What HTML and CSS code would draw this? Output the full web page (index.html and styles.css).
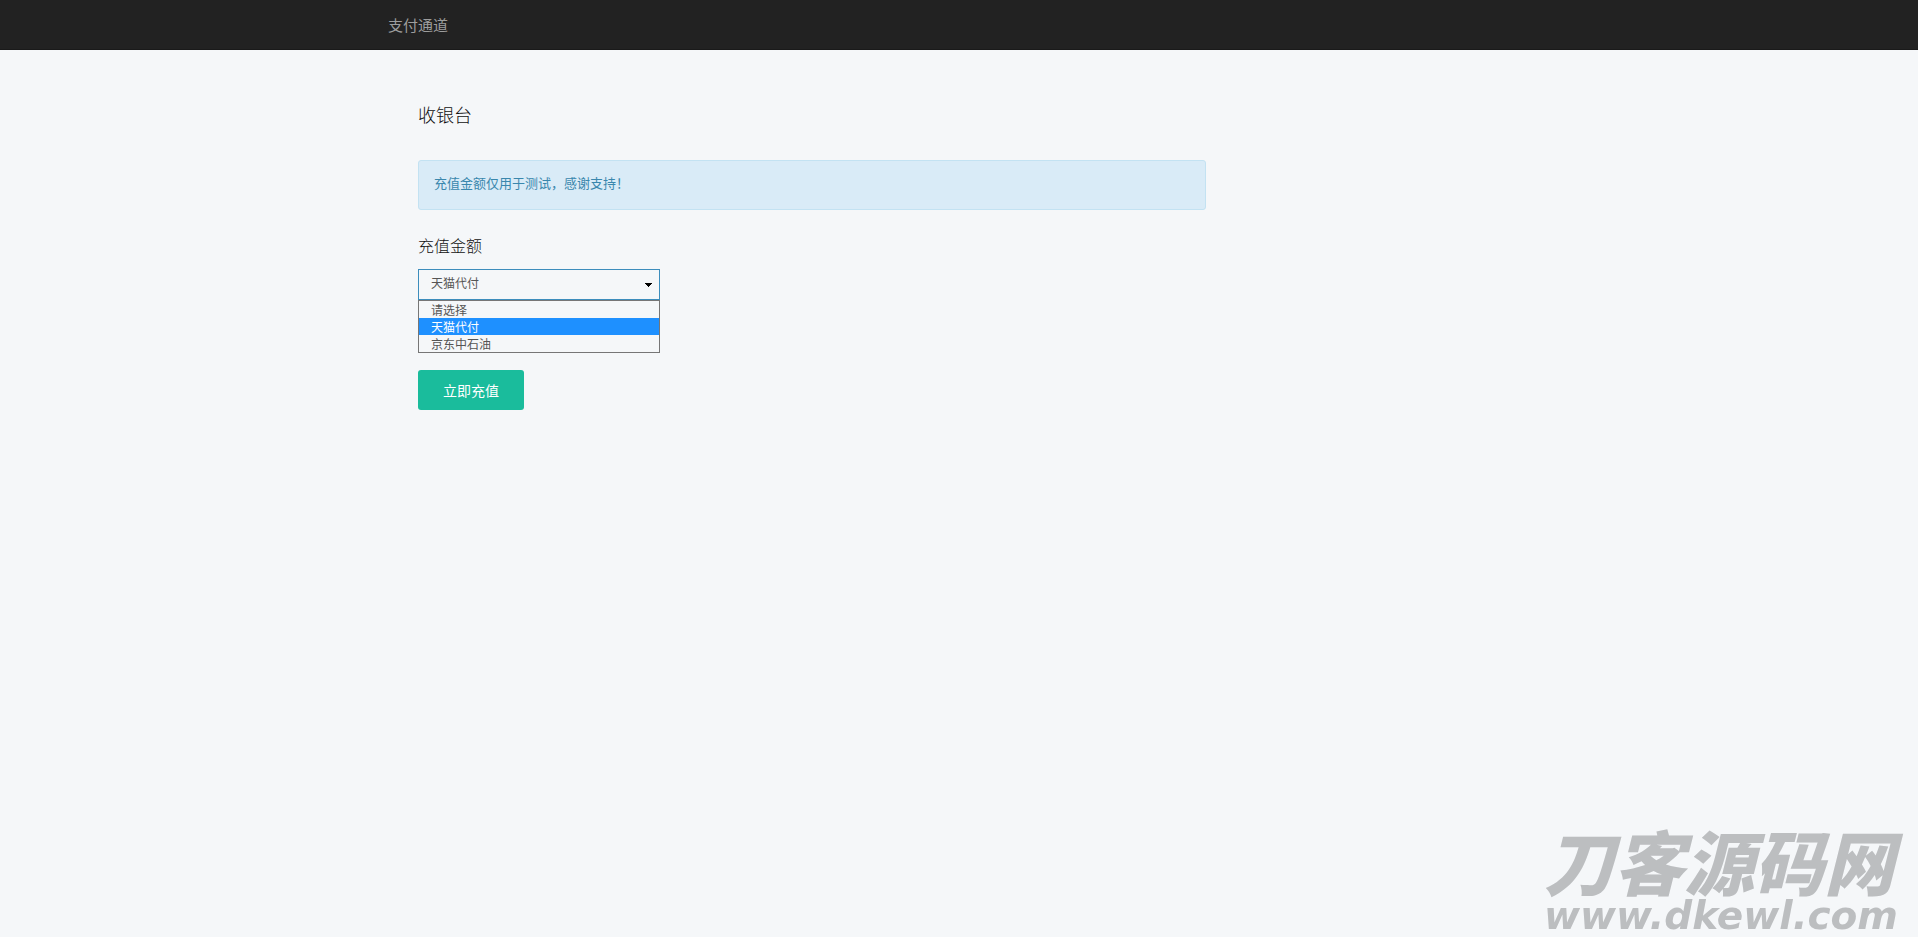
FILE: index.html
```html
<!DOCTYPE html>
<html lang="zh-CN">
<head>
  <meta charset="UTF-8">
  <meta name="viewport" content="width=device-width, initial-scale=1.0">
  <title>收银台</title>
  <link rel="stylesheet" href="styles.css">
</head>
<body>

  <nav class="navbar">
    <div class="container">
      <a class="navbar-link" href="#">支付通道</a>
    </div>
  </nav>

  <main class="container">
    <div class="content">
      <h1 class="page-title">收银台</h1>

      <div class="alert">充值金额仅用于测试，感谢支持！</div>

      <form class="pay-form">
        <label class="pay-label" for="channel">充值金额</label>
        <div class="select-box">
          <select class="form-control" id="channel" name="channel">
            <option>请选择</option>
            <option selected>天猫代付</option>
            <option>京东中石油</option>
          </select>
          <svg class="caret" viewBox="0 0 8 5" aria-hidden="true"><path d="M0 0h7v1H6v1H5v1H4v1H3V3H2V2H1V1H0z"/></svg>
          <ul class="dropdown" role="listbox" aria-label="充值金额">
            <li role="option">请选择</li>
            <li class="active" role="option" aria-selected="true">天猫代付</li>
            <li role="option">京东中石油</li>
          </ul>
        </div>
        <button class="btn" type="button">立即充值</button>
      </form>
    </div>
  </main>

  <div class="watermark">
    <div class="watermark-name">刀客源码网</div>
    <div class="watermark-url">www.dkewl.com</div>
  </div>

</body>
</html>
```
FILE: styles.css
```css
* {
  box-sizing: border-box;
}

body {
  margin: 0;
  background-color: #f5f7f9;
  color: #333;
  font-family: "Noto Sans CJK SC", sans-serif;
  font-size: 13px;
  line-height: 18px;
}

.container {
  max-width: 1170px;
  margin: 0 auto;
}

/* Top bar */
.navbar {
  background-color: #222;
  border-bottom: 1px solid #1a1a1a;
}

.navbar-link {
  display: inline-block;
  padding: 14px;
  color: #9d9d9d;
  font-size: 15px;
  line-height: 21px;
  text-decoration: none;
  vertical-align: top;
}

/* Checkout */
.content {
  max-width: 876px;
  padding: 49px 44px;
}

.page-title {
  margin: 0 0 31px;
  color: #111;
  font-size: 18px;
  font-weight: 300;
  line-height: 30px;
}

.alert {
  padding: 13px 15px 17px;
  margin-bottom: 23px;
  background-color: #d9ebf7;
  border: 1px solid #c3e2f2;
  border-radius: 3px;
  color: #3a87ad;
}

.pay-label {
  display: block;
  margin-bottom: 12px;
  color: #111;
  font-size: 16px;
  font-weight: 300;
  line-height: 24px;
}

.select-box {
  position: relative;
  width: 242px;
  max-width: 100%;
  margin-bottom: 70px;
}

.form-control {
  display: block;
  width: 100%;
  height: 31px;
  padding: 0 12px 4px;
  appearance: none;
  background-color: transparent;
  border: 1px solid #3c8dbc;
  border-radius: 0;
  color: #555;
  font-family: inherit;
  font-size: 12px;
}

.caret {
  position: absolute;
  top: 14px;
  right: 7px;
  width: 8px;
  height: 5px;
  pointer-events: none;
}

.dropdown {
  position: absolute;
  top: 100%;
  left: 0;
  right: 0;
  margin: 0;
  padding: 0;
  list-style: none;
  background-color: #f5f7f9;
  border: 1px solid #767676;
  color: #555;
  font-size: 12px;
  line-height: 17px;
}

.dropdown li {
  padding: 0 12px;
}

.dropdown .active {
  background-color: #1e90ff;
  color: #fff;
}

.btn {
  height: 40px;
  padding: 0 25px;
  background-color: #1abc9c;
  border: 0;
  border-radius: 3px;
  color: #fff;
  font-family: inherit;
  font-size: 14px;
  cursor: pointer;
}

/* Site mark over the page corner */
.watermark {
  position: fixed;
  right: 20px;
  bottom: 0;
  color: #bcbec0;
  font-style: italic;
  font-weight: 900;
  pointer-events: none;
}

.watermark-name {
  font-size: 70px;
  line-height: 70px;
}

.watermark-url {
  font-family: "DejaVu Sans", sans-serif;
  font-size: 39px;
  line-height: 42px;
}
```
